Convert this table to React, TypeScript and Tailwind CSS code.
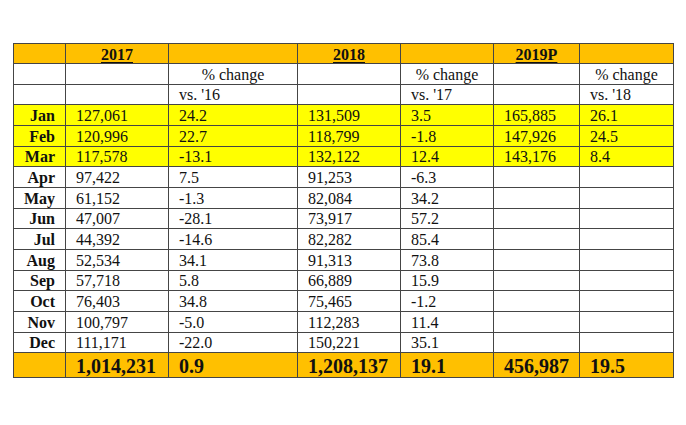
import React from 'react';

type Row = {
  m: string;
  a: string;
  ac: string;
  b: string;
  bc: string;
  c: string;
  cc: string;
  hi?: boolean;
};

const rows: Row[] = [
  { m: 'Jan', a: '127,061', ac: '24.2', b: '131,509', bc: '3.5', c: '165,885', cc: '26.1', hi: true },
  { m: 'Feb', a: '120,996', ac: '22.7', b: '118,799', bc: '-1.8', c: '147,926', cc: '24.5', hi: true },
  { m: 'Mar', a: '117,578', ac: '-13.1', b: '132,122', bc: '12.4', c: '143,176', cc: '8.4', hi: true },
  { m: 'Apr', a: '97,422', ac: '7.5', b: '91,253', bc: '-6.3', c: '', cc: '' },
  { m: 'May', a: '61,152', ac: '-1.3', b: '82,084', bc: '34.2', c: '', cc: '' },
  { m: 'Jun', a: '47,007', ac: '-28.1', b: '73,917', bc: '57.2', c: '', cc: '' },
  { m: 'Jul', a: '44,392', ac: '-14.6', b: '82,282', bc: '85.4', c: '', cc: '' },
  { m: 'Aug', a: '52,534', ac: '34.1', b: '91,313', bc: '73.8', c: '', cc: '' },
  { m: 'Sep', a: '57,718', ac: '5.8', b: '66,889', bc: '15.9', c: '', cc: '' },
  { m: 'Oct', a: '76,403', ac: '34.8', b: '75,465', bc: '-1.2', c: '', cc: '' },
  { m: 'Nov', a: '100,797', ac: '-5.0', b: '112,283', bc: '11.4', c: '', cc: '' },
  { m: 'Dec', a: '111,171', ac: '-22.0', b: '150,221', bc: '35.1', c: '', cc: '' },
];

const box = 'border border-[#454545] p-0 pt-[2px]';
const cell = `${box} pl-[10px] text-left`;

export default function App() {
  return (
    <div className="w-[686px] h-[425px] bg-white pt-[43px] pl-[13px] font-[family-name:'Liberation_Serif','Times_New_Roman',serif] text-[16px] leading-none text-[#111]">
      <table className="table-fixed border-collapse w-[660px]">
        <colgroup>
          <col className="w-[52px]" />
          <col className="w-[103px]" />
          <col className="w-[129px]" />
          <col className="w-[103px]" />
          <col className="w-[93px]" />
          <col className="w-[86px]" />
          <col className="w-[94px]" />
        </colgroup>
        <tbody>
          {/* year header */}
          <tr className="h-[20px] bg-[#ffc000] font-bold">
            <td className={box} />
            <td className={`${box} text-center underline underline-offset-2`}>2017</td>
            <td className={box} />
            <td className={`${box} text-center underline underline-offset-2`}>2018</td>
            <td className={box} />
            <td className={`${box} text-center underline underline-offset-2`}>2019P</td>
            <td className={box} />
          </tr>
          <tr className="h-[20.67px]">
            <td className={box} />
            <td className={box} />
            <td className={`${box} text-center`}>% change</td>
            <td className={box} />
            <td className={`${box} text-center`}>% change</td>
            <td className={box} />
            <td className={`${box} text-center`}>% change</td>
          </tr>
          <tr className="h-[20.67px]">
            <td className={box} />
            <td className={box} />
            <td className={cell}>vs. '16</td>
            <td className={box} />
            <td className={cell}>vs. '17</td>
            <td className={box} />
            <td className={cell}>vs. '18</td>
          </tr>

          {rows.map((r) => (
            <tr key={r.m} className={`h-[20.67px] ${r.hi ? 'bg-[#ffff00]' : 'bg-white'}`}>
              <td className={`${box} pr-[10px] text-right font-bold`}>{r.m}</td>
              <td className={cell}>{r.a}</td>
              <td className={cell}>{r.ac}</td>
              <td className={cell}>{r.b}</td>
              <td className={cell}>{r.bc}</td>
              <td className={cell}>{r.c}</td>
              <td className={cell}>{r.cc}</td>
            </tr>
          ))}

          {/* totals */}
          <tr className="h-[25px] bg-[#ffc000] font-bold text-[20px]">
            <td className={box} />
            <td className={cell}>1,014,231</td>
            <td className={cell}>0.9</td>
            <td className={cell}>1,208,137</td>
            <td className={cell}>19.1</td>
            <td className={cell}>456,987</td>
            <td className={cell}>19.5</td>
          </tr>
        </tbody>
      </table>
    </div>
  );
}
